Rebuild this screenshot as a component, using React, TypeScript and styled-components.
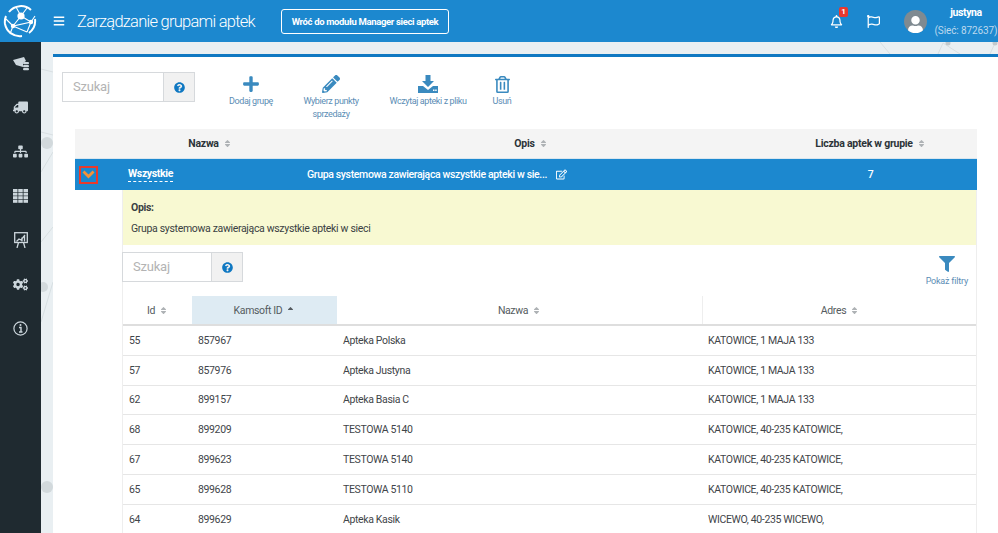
import React from 'react';
import styled, { createGlobalStyle } from 'styled-components';
import {
  FaBars,
  FaRegBell,
  FaRegFlag,
  FaPlus,
  FaPencilAlt,
  FaRegTrashAlt,
  FaQuestionCircle,
  FaFilter,
  FaRegEdit,
  FaSort,
  FaSortUp,
  FaTruck,
  FaSitemap,
  FaCogs,
  FaUser,
} from 'react-icons/fa';

const GlobalStyle = createGlobalStyle`
  html, body {
    margin: 0;
    height: 533px;
    overflow: hidden;
    background: #e9eff2;
    font-family: Roboto, "Liberation Sans", sans-serif;
  }
  * { box-sizing: border-box; }
`;

const Page = styled.div`
  width: 998px;
  height: 533px;
  display: flex;
  flex-direction: column;
  overflow: hidden;
`;

const TopBar = styled.header`
  height: 42px;
  flex: none;
  background: #1c88cf;
  color: #fff;
  display: flex;
  align-items: center;
`;

const LogoBox = styled.div`
  width: 53px;
  flex: none;
  padding-left: 3px;
  display: flex;
`;

const Burger = styled.span`
  width: 24px;
  font-size: 12px;
  display: flex;
`;

const Title = styled.h1`
  margin: 0 26px 0 0;
  width: 178px;
  font-size: 16.5px;
  font-weight: 300;
  letter-spacing: -0.75px;
  white-space: nowrap;
`;

const BackButton = styled.button`
  height: 25px;
  width: 168px;
  padding: 0;
  background: transparent;
  border: 1px solid #fff;
  border-radius: 3px;
  color: #fff;
  font: 700 9.5px Roboto, sans-serif;
  letter-spacing: -0.35px;
  white-space: nowrap;
`;

const TopRight = styled.div`
  margin-left: auto;
  display: flex;
  align-items: center;
`;

const BarIcon = styled.span`
  position: relative;
  display: flex;
  font-size: 13px;
  width: ${(p: { $w: number }) => p.$w}px;
`;

const Badge = styled.b`
  position: absolute;
  left: 9px;
  top: -8px;
  width: 9px;
  height: 10px;
  border-radius: 2px;
  background: #e8392f;
  font-size: 8px;
  line-height: 10px;
  text-align: center;
`;

const Avatar = styled.span`
  width: 23px;
  height: 23px;
  margin: 0 7px 0 17px;
  border-radius: 50%;
  background: #7f8a91;
  overflow: hidden;
  display: flex;
  align-items: flex-end;
  justify-content: center;
  font-size: 17px;
  color: #fff;
`;

const UserBox = styled.div`
  width: 64px;
  text-align: center;
  white-space: nowrap;
  margin-top: 1px;
`;

const UserName = styled.div`
  font-size: 10.5px;
  font-weight: 700;
  letter-spacing: -0.4px;
  line-height: 18px;
`;

const UserNet = styled.div`
  font-size: 10px;
  letter-spacing: -0.1px;
  line-height: 18px;
  color: #bcd9ee;
`;

const Body = styled.div`
  flex: 1;
  display: flex;
  min-height: 0;
`;

const Sidebar = styled.nav`
  width: 41px;
  flex: none;
  background: #1f2a30;
  padding-top: 11px;
  display: flex;
  flex-direction: column;
  align-items: center;
  gap: 24.3px;
`;

const SideIcon = styled.span`
  width: 20px;
  height: 20px;
  display: flex;
  align-items: center;
  justify-content: center;
  color: #ccd6dc;
  font-size: 15px;
`;

const Main = styled.main`
  flex: 1;
  position: relative;
  padding: 12px 0 0 12px;
  min-width: 0;
`;

const Backdrop = styled.svg`
  position: absolute;
  left: 0;
  top: 0;
  width: 100%;
  height: 100%;
`;

const Card = styled.section`
  position: relative;
  height: 100%;
  background: #fff;
  border-top: 3px solid #0f78c2;
  padding: 15px 21px 0 9px;
`;

const Toolbar = styled.div`
  display: flex;
  align-items: flex-start;
  height: 57px;
`;

const SearchBox = styled.div`
  display: flex;
  height: 30px;
  border: 1px solid #d6d9dc;
  width: ${(p: { $w: number }) => p.$w}px;
  flex: none;
`;

const SubSearch = styled(SearchBox)`
  margin-left: -1px;
`;

const SearchInput = styled.span`
  flex: 1;
  padding-left: 10px;
  font-size: 13px;
  line-height: 27px;
  color: #b3b3b3;
  letter-spacing: -0.2px;
`;

const SearchHelp = styled.span`
  width: 31px;
  background: #f1f1f1;
  border-left: 1px solid #d6d9dc;
  display: flex;
  align-items: center;
  justify-content: center;
  color: #0f78c2;
  font-size: 11px;
`;

const Actions = styled.div`
  display: flex;
  gap: 23px;
  margin-left: 34px;
`;

const Action = styled.div`
  width: ${(p: { $w: number }) => p.$w}px;
  margin-top: 2px;
  text-align: center;
  font-size: 9px;
  letter-spacing: -0.4px;
  line-height: 13px;
  color: #5b8db5;
  white-space: nowrap;
`;

const ActionIcon = styled.div`
  height: 20px;
  margin-bottom: 1px;
  display: flex;
  align-items: center;
  justify-content: center;
  color: #3a8abf;
  font-size: ${(p: { $size: number }) => p.$size}px;
`;

const GroupTable = styled.div`
  margin-left: 13px;
`;

const GroupRow = styled.div`
  display: grid;
  grid-template-columns: 47px 176px 466px 213px;
  align-items: center;
  height: ${(p: { $h: number }) => p.$h}px;
`;

const GroupHead = styled(GroupRow)`
  background: #f4f4f4;
  font-size: 10.5px;
  font-weight: 700;
  letter-spacing: -0.25px;
  color: #2c3338;
  border-bottom: 1px solid #d9e6ef;
`;

const GroupSelected = styled(GroupRow)`
  background: #1c88cf;
  color: #fff;
  font-size: 10.5px;
  font-weight: 500;
  letter-spacing: -0.35px;
`;

const HeadCell = styled.div`
  text-align: center;
  white-space: nowrap;
`;

const SortMark = styled.span`
  display: inline-flex;
  margin-left: 4px;
  vertical-align: -1px;
  font-size: 9px;
  color: #aeb2b5;
`;

const ExpandCell = styled.div`
  display: flex;
  justify-content: center;
`;

const ExpandBox = styled.span`
  width: 19px;
  height: 18px;
  margin-left: -21px;
  border: 2px solid #ea3a2c;
  display: flex;
  align-items: center;
  justify-content: center;
`;

const GroupName = styled.span`
  margin-left: 6px;
  justify-self: start;
  font-weight: 700;
  border-bottom: 1px dashed #fff;
  line-height: 14px;
`;

const GroupDesc = styled.div`
  padding-left: 9px;
  white-space: nowrap;
  display: flex;
  align-items: center;
  gap: 9px;
  svg {
    font-size: 11px;
  }
`;

const Details = styled.div`
  margin-left: 47px;
  border-left: 1px solid #eee;
  border-right: 1px solid #eee;
`;

const DescBox = styled.div`
  height: 55px;
  background: #f8f9d2;
  padding: 11px 8px;
  font-size: 10.5px;
  letter-spacing: -0.33px;
  color: #3a3f42;
  line-height: 14px;
`;

const DescLabel = styled.div`
  font-weight: 700;
  margin-bottom: 7px;
`;

const SubTools = styled.div`
  height: 51px;
  padding-top: 7px;
  display: flex;
  justify-content: space-between;
`;

const FilterAction = styled.div`
  margin: 4px 8px 0 0;
  text-align: center;
  font-size: 9px;
  letter-spacing: -0.2px;
  color: #5b8db5;
`;

const FilterIcon = styled.div`
  color: #3a8abf;
  font-size: 16px;
  height: 20px;
  display: flex;
  justify-content: center;
`;

const SubRow = styled.div`
  display: grid;
  grid-template-columns: 69px 145px 365px 275px;
  align-items: center;
  height: ${(p: { $h: number }) => p.$h}px;
  border-bottom: 1px solid #e6e6e6;
  font-size: 10.5px;
  letter-spacing: -0.36px;
  color: #3f4549;
`;

const SubHead = styled(SubRow)`
  align-items: stretch;
  border-bottom: 2px solid #dedede;
`;

const SubHeadCell = styled.div<{ $active?: boolean; $divided?: boolean }>`
  display: flex;
  align-items: center;
  justify-content: center;
  background: ${(p) => (p.$active ? '#deebf3' : 'transparent')};
  border-left: ${(p) => (p.$divided ? '1px solid #eee' : 'none')};
  color: #555b60;
`;

const ActiveSort = styled(SortMark)`
  color: #555b60;
`;

const SubCell = styled.div`
  padding-left: 6px;
  white-space: nowrap;
`;

const rows = [
  ['55', '857967', 'Apteka Polska', 'KATOWICE, 1 MAJA 133'],
  ['57', '857976', 'Apteka Justyna', 'KATOWICE, 1 MAJA 133'],
  ['62', '899157', 'Apteka Basia C', 'KATOWICE, 1 MAJA 133'],
  ['68', '899209', 'TESTOWA 5140', 'KATOWICE, 40-235 KATOWICE,'],
  ['67', '899623', 'TESTOWA 5140', 'KATOWICE, 40-235 KATOWICE,'],
  ['65', '899628', 'TESTOWA 5110', 'KATOWICE, 40-235 KATOWICE,'],
  ['64', '899629', 'Apteka Kasik', 'WICEWO, 40-235 WICEWO,'],
];

function Logo() {
  return (
    <svg width="34" height="34" viewBox="0 0 34 34" fill="none" stroke="#fff">
      <path d="M6 8 A15 15 0 0 1 28 6 M32 15 A15 15 0 0 1 26 29 M19 32 A15 15 0 0 1 2 20 A15 15 0 0 1 3 12" strokeWidth="2" />
      <path d="M18 12 L28 18 L10 22 Z M18 12 L13 3 M18 12 L24 4 M10 22 L3 15 M10 22 L7 30 M28 18 L32 12 M28 18 L24 28 M10 22 L24 28" strokeWidth="1.1" />
      <circle cx="18" cy="12" r="3.6" fill="#fff" stroke="none" />
      <circle cx="28" cy="18" r="2.2" fill="#fff" stroke="none" />
      <circle cx="10" cy="22" r="2.2" fill="#fff" stroke="none" />
    </svg>
  );
}

function OrangeChevron() {
  return (
    <svg width="13" height="9" viewBox="0 0 13 9" fill="none" stroke="#f5923a" strokeWidth="2.8">
      <path d="M1.5 1.5 L6.5 6.5 L11.5 1.5" />
    </svg>
  );
}

function TillIcon() {
  return (
    <svg width="16" height="15" viewBox="0 0 16 15" fill="#ccd6dc">
      <path d="M0 4 L11 1 L13 5 L10 7 L10 11 L3 9 Z" />
      <rect x="10" y="6" width="6" height="2.2" rx="1" />
      <rect x="10" y="9" width="6" height="2.2" rx="1" />
      <rect x="10" y="12" width="6" height="2.2" rx="1" />
    </svg>
  );
}

function ColumnsIcon() {
  return (
    <svg width="15" height="14" viewBox="0 0 15 14" fill="#ccd6dc">
      {[0, 5.25, 10.5].map((x) =>
        [0, 3.6, 7.2, 10.8].map((y) => <rect key={`${x}-${y}`} x={x} y={y} width="4.5" height="3" />),
      )}
    </svg>
  );
}

function BoardIcon() {
  return (
    <svg width="14" height="16" viewBox="0 0 14 16" fill="none" stroke="#ccd6dc">
      <rect x="0.7" y="0.7" width="12.6" height="9.8" strokeWidth="1.3" />
      <path d="M3 16 L4.5 10.5 M11 16 L9.5 10.5" strokeWidth="1.3" />
      <path d="M2.5 9.5 L5 7 L7 8 L11 3 M8 5.5 L8 9.5 M10.5 4 L10.5 9.5" strokeWidth="1.3" />
    </svg>
  );
}

function InfoRing() {
  return (
    <svg width="15" height="15" viewBox="0 0 15 15" fill="none" stroke="#ccd6dc">
      <circle cx="7.5" cy="7.5" r="6.6" strokeWidth="1.2" />
      <path d="M6 6.5 H8 V11 M6 11 H9.5" strokeWidth="1.4" />
      <circle cx="7.5" cy="4" r="1" fill="#ccd6dc" stroke="none" />
    </svg>
  );
}

function TrayDownload() {
  return (
    <svg width="20" height="18" viewBox="0 0 20 18" fill="#3a8abf">
      <path d="M7.5 0 H12.5 V6 H16 L10 12 L4 6 H7.5 Z" />
      <path d="M0 11 H5 L10 15 L15 11 H20 V18 H0 Z" />
      <rect x="15" y="14.5" width="1.5" height="1.5" fill="#fff" />
      <rect x="17.2" y="14.5" width="1.5" height="1.5" fill="#fff" />
    </svg>
  );
}

function Sort() {
  return (
    <SortMark>
      <FaSort />
    </SortMark>
  );
}

export default function App() {
  return (
    <Page>
      <GlobalStyle />
      <TopBar>
        <LogoBox>
          <Logo />
        </LogoBox>
        <Burger>
          <FaBars />
        </Burger>
        <Title>Zarządzanie grupami aptek</Title>
        <BackButton>Wróć do modułu Manager sieci aptek</BackButton>
        <TopRight>
          <BarIcon $w={37}>
            <FaRegBell />
            <Badge>1</Badge>
          </BarIcon>
          <BarIcon $w={20}>
            <FaRegFlag />
          </BarIcon>
          <Avatar>
            <FaUser />
          </Avatar>
          <UserBox>
            <UserName>justyna</UserName>
            <UserNet>(Sieć: 872637)</UserNet>
          </UserBox>
        </TopRight>
      </TopBar>
      <Body>
        <Sidebar>
          <SideIcon>
            <TillIcon />
          </SideIcon>
          <SideIcon>
            <FaTruck style={{ transform: 'scaleX(-1)' }} />
          </SideIcon>
          <SideIcon>
            <FaSitemap />
          </SideIcon>
          <SideIcon>
            <ColumnsIcon />
          </SideIcon>
          <SideIcon>
            <BoardIcon />
          </SideIcon>
          <SideIcon>
            <FaCogs />
          </SideIcon>
          <SideIcon>
            <InfoRing />
          </SideIcon>
        </Sidebar>
        <Main>
          <Backdrop viewBox="0 0 957 491" fill="none" stroke="#d8dfe2">
            <path d="M0 27 L12 30 M0 90 L12 93 M0 130 L12 110 M0 200 L12 185 M0 280 L12 240 M839 0 L849 12 M902 1 L897 12 M902 1 L919 12 M954 1 L949 12" />
            <circle cx="6" cy="101" r="6" fill="#d2d9dc" stroke="none" />
            <circle cx="2" cy="245" r="5" fill="#d2d9dc" stroke="none" />
            <circle cx="6" cy="445" r="6" fill="#d2d9dc" stroke="none" />
            <circle cx="907" cy="1" r="2.5" fill="#c2c9cc" stroke="none" />
            <circle cx="954" cy="1" r="2.5" fill="#c2c9cc" stroke="none" />
          </Backdrop>
          <Card>
            <Toolbar>
              <SearchBox $w={133}>
                <SearchInput>Szukaj</SearchInput>
                <SearchHelp>
                  <FaQuestionCircle />
                </SearchHelp>
              </SearchBox>
              <Actions>
                <Action $w={44}>
                  <ActionIcon $size={18}>
                    <FaPlus />
                  </ActionIcon>
                  Dodaj grupę
                </Action>
                <Action $w={70}>
                  <ActionIcon $size={18}>
                    <FaPencilAlt />
                  </ActionIcon>
                  Wybierz punkty
                  <br />
                  sprzedaży
                </Action>
                <Action $w={78}>
                  <ActionIcon $size={19}>
                    <TrayDownload />
                  </ActionIcon>
                  Wczytaj apteki z pliku
                </Action>
                <Action $w={24}>
                  <ActionIcon $size={17}>
                    <FaRegTrashAlt />
                  </ActionIcon>
                  Usuń
                </Action>
              </Actions>
            </Toolbar>
            <GroupTable>
              <GroupHead $h={30}>
                <span />
                <HeadCell>
                  Nazwa
                  <Sort />
                </HeadCell>
                <HeadCell>
                  Opis
                  <Sort />
                </HeadCell>
                <HeadCell>
                  Liczba aptek w grupie
                  <Sort />
                </HeadCell>
              </GroupHead>
              <GroupSelected $h={31}>
                <ExpandCell>
                  <ExpandBox>
                    <OrangeChevron />
                  </ExpandBox>
                </ExpandCell>
                <GroupName>Wszystkie</GroupName>
                <GroupDesc>
                  Grupa systemowa zawierająca wszystkie apteki w sie...
                  <FaRegEdit />
                </GroupDesc>
                <HeadCell>7</HeadCell>
              </GroupSelected>
              <Details>
                <DescBox>
                  <DescLabel>Opis:</DescLabel>
                  Grupa systemowa zawierająca wszystkie apteki w sieci
                </DescBox>
                <SubTools>
                  <SubSearch $w={121}>
                    <SearchInput>Szukaj</SearchInput>
                    <SearchHelp>
                      <FaQuestionCircle />
                    </SearchHelp>
                  </SubSearch>
                  <FilterAction>
                    <FilterIcon>
                      <FaFilter />
                    </FilterIcon>
                    Pokaż filtry
                  </FilterAction>
                </SubTools>
                <SubHead $h={30}>
                  <SubHeadCell>
                    Id
                    <Sort />
                  </SubHeadCell>
                  <SubHeadCell $active>
                    Kamsoft ID
                    <ActiveSort>
                      <FaSortUp />
                    </ActiveSort>
                  </SubHeadCell>
                  <SubHeadCell>
                    Nazwa
                    <Sort />
                  </SubHeadCell>
                  <SubHeadCell $divided>
                    Adres
                    <Sort />
                  </SubHeadCell>
                </SubHead>
                {rows.map((row) => (
                  <SubRow $h={29.8} key={row[0]}>
                    {row.map((value) => (
                      <SubCell key={value}>{value}</SubCell>
                    ))}
                  </SubRow>
                ))}
              </Details>
            </GroupTable>
          </Card>
        </Main>
      </Body>
    </Page>
  );
}
